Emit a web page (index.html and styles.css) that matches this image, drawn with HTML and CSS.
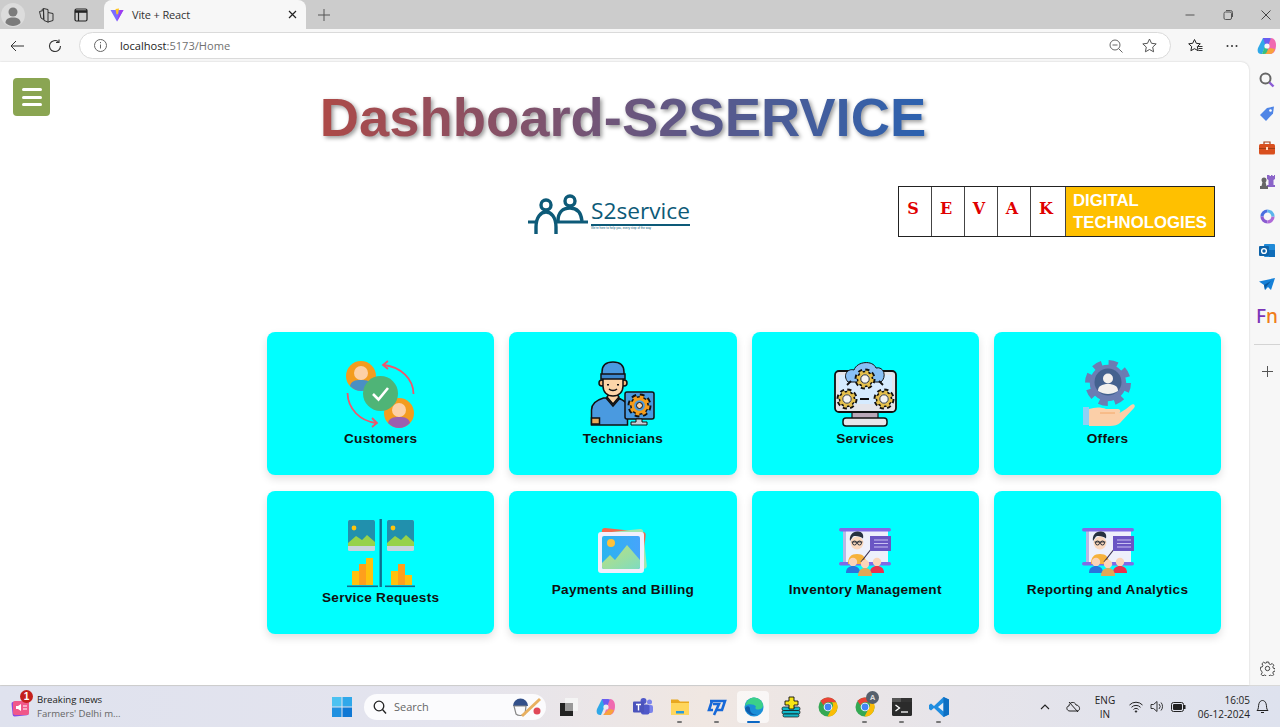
FILE: index.html
```html
<!DOCTYPE html>
<html lang="en">
<head>
<meta charset="UTF-8">
<meta name="viewport" content="width=device-width, initial-scale=1.0">
<title>Vite + React</title>
<link rel="stylesheet" href="styles.css">
</head>
<body>

<svg class="defs" width="0" height="0">
    <symbol id="gear" viewBox="-12 -12 24 24">
        <circle r="9.500" fill="none" stroke="currentColor" stroke-width="4" stroke-dasharray="4.200 3.260"/>
        <circle r="7.600" fill="none" stroke="currentColor" stroke-width="3"/>
    </symbol>
    <symbol id="presenter" viewBox="0 0 52 50">
        <rect x="4" y="2" width="45" height="34" fill="#eef0fb"/>
        <rect x="4" y="2" width="3" height="34" fill="#b6b8e6"/>
        <rect width="52" height="3.400" y="1" rx="1.700" fill="#7f6be6"/>
        <rect width="52" height="3.400" y="35" rx="1.700" fill="#7f6be6"/>
        <path d="M9 37c0-7 3-10 9-10s9 3 9 10z" fill="#f6b23c"/>
        <circle cx="18" cy="16" r="6.400" fill="#fbd9bd"/>
        <path d="M11 14c-1-6 3-10 8-9.500 4 0 6 3 5 7-2-2-7-3-10-2z" fill="#27313f"/>
        <path d="M12.500 15h11" stroke="#1d2530" stroke-width=".8"/>
        <circle cx="15.500" cy="16" r="2" fill="none" stroke="#1d2530" stroke-width=".9"/>
        <circle cx="20.500" cy="16" r="2" fill="none" stroke="#1d2530" stroke-width=".9"/>
        <path d="M22 35l11-14" stroke="#3a3050" stroke-width="1.200"/>
        <rect x="31" y="9" width="21" height="15" fill="#6a55c4"/>
        <path d="M35 13h14M35 16.500h14M35 20h14" stroke="#c8c0f2" stroke-width="1.100"/>
        <circle cx="14" cy="35" r="4.200" fill="#fbd4b8"/>
        <path d="M7 46c0-5 3-7 7-7s7 2 7 7z" fill="#2a74dc"/>
        <circle cx="38" cy="35" r="4.200" fill="#fbd4b8"/>
        <path d="M31 46c0-5 3-7 7-7s7 2 7 7z" fill="#e8324e"/>
        <circle cx="26" cy="37" r="4.200" fill="#fbd4b8"/>
        <path d="M19 49c0-5 3-8 7-8s7 3 7 8z" fill="#e0a856"/>
    </symbol>
</svg>

<div class="window">

    <!-- tab strip -->
    <div class="tabstrip">
        <span class="strip-btn profile">
            <svg width="24" height="24" viewBox="0 0 24 24"><circle cx="12" cy="12" r="12" fill="#dcdcdc"/><circle cx="12" cy="9" r="4.500" fill="#7b7b7b"/><path d="M4.500 20c0-4 3-5.500 7.500-5.500s7.500 1.500 7.500 5.500c-2 2-5 3-7.500 3s-5.500-1-7.500-3z" fill="#7b7b7b"/></svg>
        </span>
        <span class="strip-btn workspaces">
            <svg width="16" height="16" viewBox="0 0 16 16" fill="none" stroke="#333" stroke-width="1"><path d="M5.500 1.500l4.500 1v3l5 1v7l-5 1.500-4-1.500z"/><path d="M3.500 3l2-1.500M1.500 4.500l4-1v9l-2.500-1.500zM10 5.500v10"/></svg>
        </span>
        <span class="strip-btn tabs-btn">
            <svg width="14" height="14" viewBox="0 0 14 14" fill="none" stroke="#222" stroke-width="1.200"><rect x="1" y="1" width="12" height="12" rx="1.500"/><path d="M1 3.500h12" stroke-width="2.600"/><path d="M4.500 4v9"/></svg>
        </span>
        <div class="tab">
            <svg width="14" height="14" viewBox="0 0 14 14"><path d="M0.500 2l6.500 11.500L13.500 2z" fill="#7b6cff"/><path d="M7 13.500L10 2h3.500z" fill="#a03cf0"/><path d="M5.500 1L9 .5 8 6l-1.500.5z" fill="#ffc420"/></svg>
            <span class="tab-title">Vite + React</span>
            <svg class="tab-close" width="9" height="9" viewBox="0 0 9 9"><path d="M1 1l7 7M8 1L1 8" stroke="#222" stroke-width="1.200"/></svg>
        </div>
        <span class="strip-btn new-tab">
            <svg width="12" height="12" viewBox="0 0 12 12"><path d="M6 0v12M0 6h12" stroke="#555" stroke-width="1"/></svg>
        </span>
        <div class="window-controls">
            <svg width="12" height="12" viewBox="0 0 12 12"><path d="M1.500 6h9" stroke="#555"/></svg>
            <svg width="12" height="12" viewBox="0 0 12 12" fill="none" stroke="#555"><rect x="2" y="3" width="7.500" height="7.500" rx="1.500"/><path d="M4 1.500h4.500a2 2 0 0 1 2 2V8"/></svg>
            <svg width="12" height="12" viewBox="0 0 12 12"><path d="M1.500 1.500l9 9M10.500 1.500l-9 9" stroke="#444"/></svg>
        </div>
    </div>

    <!-- address bar -->
    <div class="toolbar">
        <span class="tool-btn">
            <svg width="14" height="12" viewBox="0 0 14 12" fill="none" stroke="#333" stroke-width="1"><path d="M14 6H1M6 1L1 6l5 5"/></svg>
        </span>
        <span class="tool-btn reload">
            <svg width="14" height="14" viewBox="0 0 14 14" fill="none" stroke="#333" stroke-width="1.100"><path d="M12.500 7A5.500 5.500 0 1 1 10.500 2.800"/><path d="M11 .5v3h-3"/></svg>
        </span>
        <div class="address">
            <svg width="13" height="13" viewBox="0 0 13 13" fill="none" stroke="#666"><circle cx="6.500" cy="6.500" r="6"/><path d="M6.500 5.500v4M6.500 3v1.200"/></svg>
            <span class="url"><b>localhost</b>:5173/Home</span>
            <svg class="addr-zoom" width="14" height="14" viewBox="0 0 14 14" fill="none" stroke="#666"><circle cx="6" cy="6" r="5"/><path d="M3.500 6h5M9.500 9.500l4 4"/></svg>
            <svg class="addr-star" width="15" height="15" viewBox="0 0 15 15" fill="none" stroke="#555"><path d="M7.500 1l2 4.300 4.700.6-3.500 3.200.9 4.700-4.100-2.300-4.100 2.300.9-4.700L.8 5.900l4.700-.6z"/></svg>
        </div>
        <span class="tool-btn favs">
            <svg width="15" height="15" viewBox="0 0 15 15" fill="none" stroke="#222"><path d="M6.500 1.500l1.800 3.800 4 .5-3 2.800.8 4.100-3.600-2-3.600 2 .8-4.100-3-2.800 4-.5z"/><path d="M10 8.500h4.500M10.500 10.500h4M10.500 12.500h4" stroke="#333"/></svg>
        </span>
        <span class="tool-btn dots">
            <svg width="12" height="4" viewBox="0 0 12 4" fill="#333"><circle cx="1.500" cy="2" r="1"/><circle cx="6" cy="2" r="1"/><circle cx="10.500" cy="2" r="1"/></svg>
        </span>
        <span class="copilot">
            <svg width="20" height="20" viewBox="0 0 20 20"><path d="M6 2h5l-3 9-3 7H4C1 18 0 15 1 12z" fill="#2fa8e8"/><path d="M6 2h6c2 0 3 1 4 3l-4 3H8z" fill="#6a5cf0"/><path d="M14 2c3 0 5 3 5 7 0 5-2 9-6 9H8l3-8z" fill="#f06ab0"/><path d="M7 18h6c2 0 4-2 5-5l-5-1z" fill="#f8a23c"/><path d="M8 10l-3 8h2c2 0 3-2 4-5z" fill="#35c07e"/><circle cx="10" cy="10" r="2.600" fill="#f7f7f7"/></svg>
        </span>
    </div>

    <div class="main">

        <div class="content">
            <button class="menu-toggle">
                <span></span><span></span><span></span>
            </button>

            <h1 class="page-title">Dashboard-S2SERVICE</h1>

            <div class="logos">
                <div class="logo-s2">
                    <svg width="60" height="42" viewBox="0 0 60 42" fill="none" stroke="#0d5a78" stroke-width="3.400">
                        <circle cx="18" cy="11" r="5"/>
                        <circle cx="42" cy="7" r="5"/>
                        <path d="M8 40V33c0-10 5-15 10-15s10 5 10 15v7"/>
                        <path d="M30 27c0-9 5-13 12-13s11 4 12 13"/>
                        <path d="M0 28h10M26 28h34" stroke-width="3"/>
                    </svg>
                    <div class="s2-text">
                        <span class="s2-name">S2service</span>
                        <span class="s2-tag">We're here to help you, every step of the way</span>
                    </div>
                </div>
                <div class="logo-sevak">
                    <span class="sevak-cell">S</span>
                    <span class="sevak-cell">E</span>
                    <span class="sevak-cell">V</span>
                    <span class="sevak-cell">A</span>
                    <span class="sevak-cell wide">K</span>
                    <span class="sevak-brand">DIGITAL<br>TECHNOLOGIES</span>
                </div>
            </div>

            <div class="card-grid">

                <div class="card">
                    <svg class="card-icon" viewBox="0 0 70 70">
                        <circle cx="15" cy="16" r="15" fill="#f39c1f"/>
                        <circle cx="15" cy="13" r="7" fill="#fdd0a5"/>
                        <path d="M4 26c1-5 5-6 11-6s10 1 11 6c-3 3-7 5-11 5s-8-2-11-5z" fill="#4a8fc4"/>
                        <circle cx="53" cy="53" r="15" fill="#f39c1f"/>
                        <circle cx="53" cy="50" r="7" fill="#fdd0a5"/>
                        <path d="M42 63c1-5 5-6 11-6s10 1 11 6c-3 3-7 5-11 5s-8-2-11-5z" fill="#9b5fae"/>
                        <circle cx="34.500" cy="33.500" r="17.500" fill="#4fb477"/>
                        <path d="M27 34l5.500 5.500L42 28" fill="none" stroke="#fff" stroke-width="2.600"/>
                        <g fill="none" stroke="#f0566c" stroke-width="1.800">
                            <path d="M67.500 34C67.500 19 55 7 38 5"/>
                            <path d="M42 1l-5 4 5 4"/>
                            <path d="M1.500 33C2 49 14 61 30 63"/>
                            <path d="M26 58l5 5-5 4"/>
                        </g>
                    </svg>
                    <span class="card-label">Customers</span>
                </div>

                <div class="card">
                    <svg class="card-icon" viewBox="0 0 70 70">
                        <g stroke="#111" stroke-width="1.500">
                            <path d="M3.500 65V50c0-7 5-10 12-12h14c7 2 10 5 10 12v15z" fill="#4a9ae0"/>
                            <path d="M19 37l6 7 6-7-3-4h-6z" fill="#fbd2a2"/>
                            <path d="M18 38l7 8 7-8" fill="none"/>
                            <rect x="3.500" y="58" width="8" height="6" fill="#e8a95a"/>
                            <rect x="37" y="32" width="29" height="27" rx="2" fill="#4a9ae0"/>
                            <circle cx="14" cy="23" r="3" fill="#f5b87a"/>
                            <circle cx="36" cy="23" r="3" fill="#f5b87a"/>
                            <path d="M15 18h20v8c0 6-4 10-10 10s-10-4-10-10z" fill="#fcd5a8"/>
                            <path d="M14 12c0-8 5-10 11-10s11 2 11 10v5H14z" fill="#4a9ae0"/>
                            <path d="M13 19h24v-5H13z" fill="#3c86cc"/>
                        </g>
                        <path d="M20 24v1.500M30 24v1.500" stroke="#111" stroke-width="2"/>
                        <path d="M21 29c2 2 6 2 8 0" stroke="#111" fill="none" stroke-width="1.300"/>
                        <path d="M48 59h6v3h5v3H43v-3h5z" fill="#c6cdd8" stroke="#111"/>
                        <use href="#gear" x="39" y="33" width="25" height="25" class="gear-dark"/>
                        <use href="#gear" x="41" y="35" width="21" height="21" class="gear-orange"/>
                        <circle cx="51.500" cy="45.500" r="3" fill="#fcd5a8" stroke="#111"/>
                    </svg>
                    <span class="card-label">Technicians</span>
                </div>

                <div class="card">
                    <svg class="card-icon" viewBox="0 0 70 70">
                        <rect x="22" y="52" width="26" height="9" fill="#b9a8b8" stroke="#111" stroke-width="1.200"/>
                        <rect x="13" y="58" width="44" height="8" rx="3" fill="#e6e6ea" stroke="#111" stroke-width="1.500"/>
                        <rect x="5" y="11" width="61" height="41" rx="4" fill="#e4e4ea" stroke="#111" stroke-width="1.800"/>
                        <rect x="9" y="15" width="53" height="29" fill="#d6ebff"/>
                        <path d="M18 22C12 15 18 8 24 10 27 1 43 0 46 8c8-2 11 9 5 14z" fill="#88bff5" stroke="#111" stroke-width="1"/>
                        <path d="M17 25l4-4M49 21l4 4M30 39h9" stroke="#111" stroke-width="1.800"/>
                        <use href="#gear" x="24" y="8" width="22" height="22" class="gear-dark"/>
                        <use href="#gear" x="26" y="10" width="18" height="18" class="gear-gold"/>
                        <circle cx="35" cy="19" r="4.200" fill="#f4f4f4" stroke="#111" stroke-width=".8"/>
                        <use href="#gear" x="6" y="28" width="22" height="22" class="gear-dark"/>
                        <use href="#gear" x="8" y="30" width="18" height="18" class="gear-gold"/>
                        <circle cx="17" cy="39" r="4.200" fill="#f4f4f4" stroke="#111" stroke-width=".8"/>
                        <use href="#gear" x="43" y="28" width="22" height="22" class="gear-dark"/>
                        <use href="#gear" x="45" y="30" width="18" height="18" class="gear-gold"/>
                        <circle cx="54" cy="39" r="4.200" fill="#f4f4f4" stroke="#111" stroke-width=".8"/>
                    </svg>
                    <span class="card-label">Services</span>
                </div>

                <div class="card">
                    <svg class="card-icon" viewBox="0 0 70 70">
                        <use href="#gear" x="11" y="-1" width="48" height="48" class="gear-slate"/>
                        <circle cx="35" cy="23" r="15" fill="#6b7db3"/>
                        <circle cx="35" cy="22" r="13.500" fill="#43618f"/>
                        <circle cx="35" cy="18.500" r="5" fill="#f2f0ee"/>
                        <path d="M25 31c0-5 4-7 10-7s10 2 10 7c-3 2-7 3-10 3s-7-1-10-3z" fill="#f2f0ee"/>
                        <rect x="10" y="47" width="6" height="18" fill="#8fd0f5"/>
                        <path d="M16 49c6-2 12-2 17 0h12c3 0 3 4 0 5l8-5 5-4c3-2 5 1 3 3L47 63c-2 2-6 3-10 3H16z" fill="#fbcfa8"/>
                        <path d="M27 53h15" stroke="#f4a869" stroke-width="1"/>
                    </svg>
                    <span class="card-label">Offers</span>
                </div>

                <div class="card">
                    <svg class="card-icon" viewBox="0 0 70 70">
                        <rect x="33.500" y="0" width="2.400" height="68" fill="#0d6f90"/>
                        <rect x="2" y="1" width="27" height="31" rx="1.500" fill="#c9d4dc"/>
                        <path d="M2 2.500a1.500 1.500 0 0 1 1.500-1.500h24A1.500 1.500 0 0 1 29 2.500V27H2z" fill="#2190ad"/>
                        <path d="M2 24l8-7 6 4 5-5 8 7v4H2z" fill="#96d24a"/>
                        <circle cx="8" cy="9" r="2.400" fill="#ffc40c"/>
                        <rect x="41" y="1" width="27" height="31" rx="1.500" fill="#c9d4dc"/>
                        <path d="M41 2.500a1.500 1.500 0 0 1 1.500-1.500h24A1.500 1.500 0 0 1 68 2.500V27H41z" fill="#2190ad"/>
                        <path d="M41 24l8-7 6 4 5-5 8 7v4H41z" fill="#96d24a"/>
                        <circle cx="47" cy="9" r="2.400" fill="#ffc40c"/>
                        <rect x="6" y="52" width="7" height="14" fill="#ffc10e"/>
                        <rect x="13" y="45" width="7" height="21" fill="#ff9f1c"/>
                        <rect x="20" y="39" width="7" height="27" fill="#ffc10e"/>
                        <rect x="45" y="52" width="7" height="14" fill="#ffc10e"/>
                        <rect x="52" y="45" width="7" height="21" fill="#ff9f1c"/>
                        <rect x="59" y="56" width="7" height="10" fill="#ffc10e"/>
                        <rect x="1" y="66.500" width="31" height="1.600" fill="#0d6f90"/>
                        <rect x="39" y="66.500" width="30" height="1.600" fill="#0d6f90"/>
                    </svg>
                    <span class="card-label">Service Requests</span>
                </div>

                <div class="card">
                    <svg class="card-icon small" viewBox="0 0 52 50">
                        <defs>
                            <linearGradient id="sky" x1="0" y1="0" x2="1" y2="0"><stop offset="0" stop-color="#2ab4f0"/><stop offset="1" stop-color="#46a4fb"/></linearGradient>
                            <linearGradient id="hill" x1="0" y1="0" x2="1" y2="1"><stop offset="0" stop-color="#bfe07a"/><stop offset="1" stop-color="#7fdcc0"/></linearGradient>
                        </defs>
                        <rect x="3" y="3" width="44" height="40" rx="3" fill="#f2694f" transform="rotate(6 25 23)"/>
                        <rect x="4" y="4" width="44" height="40" rx="3" fill="#a4e6b0" transform="rotate(-6 25 23)"/>
                        <rect x="1" y="5" width="46" height="41" rx="3" fill="#f1effc"/>
                        <rect x="5" y="9" width="38" height="33" rx="2" fill="url(#sky)"/>
                        <path d="M5 36l8-8 5 5 12-15 13 15v7a2 2 0 0 1-2 2H7a2 2 0 0 1-2-2z" fill="url(#hill)"/>
                        <circle cx="14" cy="16" r="4" fill="#ffc13a"/>
                    </svg>
                    <span class="card-label">Payments and Billing</span>
                </div>

                <div class="card">
                    <svg class="card-icon small"><use href="#presenter"/></svg>
                    <span class="card-label">Inventory Management</span>
                </div>

                <div class="card">
                    <svg class="card-icon small"><use href="#presenter"/></svg>
                    <span class="card-label">Reporting and Analytics</span>
                </div>

            </div>
        </div>

        <!-- edge sidebar -->
        <div class="sidebar">
            <span class="side-item">
                <svg width="16" height="16" viewBox="0 0 16 16" fill="none"><circle cx="6.500" cy="6.500" r="5" stroke="#666" stroke-width="2"/><path d="M10.500 10.500l4 4" stroke="#8b5cd6" stroke-width="2.400"/></svg>
            </span>
            <span class="side-item">
                <svg width="16" height="16" viewBox="0 0 16 16"><path d="M1 9l7-7 7-1.500-1 7-7 7.500z" fill="#4f85e6"/><circle cx="11.500" cy="4.500" r="1.300" fill="#fff"/></svg>
            </span>
            <span class="side-item">
                <svg width="16" height="14" viewBox="0 0 16 14"><path d="M5 3V1h6v2" fill="none" stroke="#a33d14" stroke-width="1.200"/><rect y="3" width="16" height="10.500" rx="1.500" fill="#d94f1e"/><rect y="7" width="16" height="1" fill="#a33d14"/><rect x="7" y="6" width="2" height="3" fill="#ffd9c0"/></svg>
            </span>
            <span class="side-item">
                <svg width="16" height="16" viewBox="0 0 16 16"><path d="M9 1h1.500v1H12V1h1.500v1H15V1h1v4l-1.500 1v5H16v2H8v-2h1.500V6L8 5V1z" fill="#8a64c8"/><circle cx="5" cy="6" r="2.500" fill="#666"/><path d="M3.500 8h3l1 4H9v3H1v-3h1.500z" fill="#666"/></svg>
            </span>
            <span class="side-item">
                <svg width="15" height="15" viewBox="0 0 15 15" fill="none" stroke-width="3.200"><path d="M7.500 2A5.500 5.500 0 0 0 2 7.500" stroke="#4a6fe0"/><path d="M2 7.500A5.500 5.500 0 0 0 7.500 13" stroke="#8a5cd0"/><path d="M7.500 13A5.500 5.500 0 0 0 13 7.500" stroke="#b06ad8"/><path d="M13 7.500A5.500 5.500 0 0 0 7.500 2" stroke="#5cb6ec"/></svg>
            </span>
            <span class="side-item">
                <svg width="16" height="15" viewBox="0 0 16 15"><rect x="5" y="1" width="11" height="13" rx="1" fill="#1f8ad8"/><rect x="10" y="7" width="6" height="7" fill="#0f6cb8"/><rect y="3" width="10" height="10" rx="1" fill="#0d62a8"/><circle cx="5" cy="8" r="2.400" fill="none" stroke="#fff" stroke-width="1.400"/></svg>
            </span>
            <span class="side-item">
                <svg width="16" height="13" viewBox="0 0 16 13"><path d="M0 3.500L16 0l-4 12-3-3-3 3-1-5z" fill="#1681d8"/><path d="M5 7l7-4-5 6-1 3z" fill="#0b5aa0"/></svg>
            </span>
            <span class="side-item side-fn"><span class="fn-f">F</span><span class="fn-n">n</span></span>
            <hr class="side-rule">
            <span class="side-item">
                <svg width="11" height="11" viewBox="0 0 11 11"><path d="M5.500 0v11M0 5.500h11" stroke="#555"/></svg>
            </span>
            <span class="side-item side-gear">
                <svg width="15" height="15" viewBox="0 0 15 15" fill="none" stroke="#444"><circle cx="7.500" cy="7.500" r="2.200"/><path d="M6.300 1h2.400l.4 1.900 1.500.6 1.600-1 1.600 1.700-1 1.600.6 1.500 1.900.4v2.400l-1.900.4-.6 1.500 1 1.600-1.700 1.600-1.600-1-1.500.6-.4 1.400H6.300l-.4-1.600-1.500-.6-1.600 1-1.600-1.700 1-1.600-.6-1.500L.4 8.700V6.300l1.900-.4.6-1.500-1-1.600 1.700-1.600 1.600 1 1.500-.6z"/></svg>
            </span>
        </div>
    </div>

    <!-- windows taskbar -->
    <div class="taskbar">
        <div class="news">
            <span class="news-icon">
                <svg width="22" height="24" viewBox="0 0 22 24"><rect x="2" y="6" width="16" height="15" rx="2" transform="rotate(-6 10 13)" fill="#8a4ae0"/><rect x="3" y="6" width="16" height="14" rx="2" fill="#f0588a"/><path d="M6 11h2l3-2v7l-3-2H6z" fill="#fff"/><path d="M13 11h4M13 14h4" stroke="#fff" stroke-width="1.200"/></svg>
                <span class="news-badge">1</span>
            </span>
            <div class="news-text">
                <span class="news-title">Breaking news</span>
                <span class="news-sub">Farmers' Delhi m...</span>
            </div>
        </div>

        <svg class="start" width="20" height="20" viewBox="0 0 20 20"><rect width="9.500" height="9.500" fill="#4cc2f1"/><rect x="10.500" width="9.500" height="9.500" fill="#30a8ea"/><rect y="10.500" width="9.500" height="9.500" fill="#1f90e0"/><rect x="10.500" y="10.500" width="9.500" height="9.500" fill="#0f78d4"/></svg>

        <div class="task-search">
            <svg width="14" height="14" viewBox="0 0 14 14" fill="none" stroke="#222" stroke-width="1.300"><circle cx="6" cy="6" r="4.800"/><path d="M9.500 9.500l3.500 4"/></svg>
            <span class="search-word">Search</span>
            <svg class="search-art" width="34" height="22" viewBox="0 0 34 22"><path d="M3 10a7.500 7.500 0 0 1 15 0z" fill="#33508a"/><path d="M4 10h12l-1 8c-3 2-7 2-9 0z" fill="none" stroke="#888" stroke-width="1.200"/><path d="M12 20L30 3" stroke="#e8b060" stroke-width="3"/><circle cx="27" cy="15" r="3.500" fill="#e04858"/></svg>
        </div>

        <div class="task-icons">
            <span class="task-icon">
                <svg width="20" height="20" viewBox="0 0 20 20"><rect x="6" y="1" width="13" height="13" fill="#f4f4f4"/><rect x="1" y="6" width="13" height="13" fill="#222"/><rect x="6" y="6" width="8" height="8" fill="#999"/></svg>
            </span>
            <span class="task-icon">
                <svg width="20" height="20" viewBox="0 0 20 20"><path d="M6 2h5l-3 9-3 7H4C1 18 0 15 1 12z" fill="#2fa8e8"/><path d="M6 2h6c2 0 3 1 4 3l-4 3H8z" fill="#6a5cf0"/><path d="M14 2c3 0 5 3 5 7 0 5-2 9-6 9H8l3-8z" fill="#f06ab0"/><path d="M7 18h6c2 0 4-2 5-5l-5-1z" fill="#f8a23c"/><circle cx="10" cy="10" r="2.600" fill="#ecebf0"/></svg>
            </span>
            <span class="task-icon">
                <svg width="20" height="18" viewBox="0 0 20 18"><circle cx="16.500" cy="4" r="2.500" fill="#7b83eb"/><rect x="13" y="7" width="7" height="8" rx="2" fill="#7b83eb"/><circle cx="10.500" cy="3" r="3" fill="#5059c9"/><rect x="8" y="6.500" width="8.500" height="10" rx="2" fill="#5059c9"/><rect y="3.500" width="11" height="11" rx="1" fill="#4b53bc"/><path d="M3 6.500h5M5.500 6.500v6" stroke="#fff" stroke-width="1.400"/></svg>
            </span>
            <span class="task-icon dot">
                <svg width="20" height="18" viewBox="0 0 20 18"><path d="M1 1.500h7l2 2h9V6H1z" fill="#e8a820"/><rect x="1" y="5" width="18" height="12" fill="#ffd65c"/><rect x="6" y="13" width="8" height="2.500" fill="#2a9adc"/></svg>
            </span>
            <span class="task-icon dot">
                <svg width="20" height="18" viewBox="0 0 20 18" fill="none" stroke="#1668d8" stroke-width="2.600"><path d="M3 3h15l-3 9h-5"/><path d="M6 6h6l-5 11M5 3L2 12h4"/></svg>
            </span>
            <span class="task-icon active">
                <svg width="20" height="20" viewBox="0 0 20 20"><circle cx="10" cy="10" r="9.500" fill="#1b8fd8"/><path d="M1 9C2 3 7 .5 10 .5c5 0 9 4 9 8 0 3-3 4-5 4-3 0-3-2-2-3-2-3-9-3-11-.5z" fill="#3bd08a"/><path d="M6 12c0 4 4 6 7 5.500-4 1.500-10 0-12-6C3 8 6 9 6 12z" fill="#0f5cab"/></svg>
            </span>
            <span class="task-icon">
                <svg width="20" height="22" viewBox="0 0 20 22"><rect x="1" y="11" width="18" height="3.500" rx="1.500" fill="#12b6c8" stroke="#111" stroke-width=".7"/><rect x="1" y="14.500" width="18" height="3.500" rx="1.500" fill="#12b6c8" stroke="#111" stroke-width=".7"/><rect x="2" y="18" width="16" height="3" rx="1.500" fill="#12b6c8" stroke="#111" stroke-width=".7"/><path d="M8 1h5v4h4v4h-4v4H8V9H4V5h4z" fill="#f6e614" stroke="#111" stroke-width=".9"/></svg>
            </span>
            <span class="task-icon">
                <svg width="20" height="20" viewBox="0 0 20 20"><circle cx="10" cy="10" r="9.500" fill="#34a853"/><path d="M10 .5a9.500 9.500 0 0 1 8.300 4.800H10a4.800 4.800 0 0 0-4.500 3L2.500 4A9.500 9.500 0 0 1 10 .5z" fill="#ea4335"/><path d="M18.300 5.300A9.500 9.500 0 0 1 9.500 19.500L14 11a4.800 4.800 0 0 0 0-5.700z" fill="#fbbc05"/><circle cx="10" cy="10" r="4.300" fill="#fff"/><circle cx="10" cy="10" r="3.400" fill="#4285f4"/></svg>
            </span>
            <span class="task-icon dot">
                <svg width="20" height="20" viewBox="0 0 20 20"><circle cx="10" cy="10" r="9.500" fill="#34a853"/><path d="M10 .5a9.500 9.500 0 0 1 8.300 4.800H10a4.800 4.800 0 0 0-4.500 3L2.500 4A9.500 9.500 0 0 1 10 .5z" fill="#ea4335"/><path d="M18.300 5.300A9.500 9.500 0 0 1 9.500 19.500L14 11a4.800 4.800 0 0 0 0-5.700z" fill="#fbbc05"/><circle cx="10" cy="10" r="4.300" fill="#fff"/><circle cx="10" cy="10" r="3.400" fill="#4285f4"/></svg>
                <span class="chrome-badge">A</span>
            </span>
            <span class="task-icon dot">
                <svg width="20" height="18" viewBox="0 0 20 18"><rect width="20" height="18" rx="1.500" fill="#2b2b2b"/><rect width="20" height="4" fill="#555"/><rect x="9" width="11" height="4" fill="#333"/><path d="M3.500 7l4 3-4 3" fill="none" stroke="#fff" stroke-width="1.300"/><path d="M9 14h7" stroke="#fff" stroke-width="1.300"/></svg>
            </span>
            <span class="task-icon dot">
                <svg width="20" height="20" viewBox="0 0 20 20"><path d="M14.500 0L20 2.500v15L14.500 20 5 11l-3 2.500L0 12V8l2-1.500L5 9z" fill="#1f8de0"/><path d="M14.500 5.500L9 10l5.500 4.500z" fill="#eaeef6"/><path d="M14.500 0L20 2.500v15L14.500 20z" fill="#0e6fc2"/></svg>
            </span>
        </div>

        <div class="tray">
            <svg class="tray-chevron" width="10" height="6" viewBox="0 0 10 6" fill="none" stroke="#222" stroke-width="1.100"><path d="M1 5l4-4 4 4"/></svg>
            <svg class="tray-cloud" width="15" height="14" viewBox="0 0 15 14" fill="none" stroke="#222" stroke-width="1"><path d="M4 11c-4 0-4-5-1-5 0-4 6-5 7-1 4 0 5 6 1 6z"/><path d="M3 2l9 10"/></svg>
            <span class="lang">ENG<br>IN</span>
            <svg class="tray-wifi" width="14" height="12" viewBox="0 0 14 12" fill="none" stroke="#222"><path d="M.5 4a9 9 0 0 1 13 0M2.500 6.300a6.200 6.200 0 0 1 9 0M4.500 8.500a3.300 3.300 0 0 1 5 0"/><circle cx="7" cy="10.500" r=".7" fill="#222"/></svg>
            <svg class="tray-sound" width="14" height="13" viewBox="0 0 14 13" fill="none" stroke="#222" stroke-width=".9"><path d="M1 4.500h2.500L7 1.500v10l-3.500-3H1z"/><path d="M9 4a3.500 3.500 0 0 1 0 5M11 2.500a6 6 0 0 1 0 8"/></svg>
            <svg class="tray-battery" width="15" height="10" viewBox="0 0 15 10"><rect x=".5" y=".5" width="12" height="9" rx="2" fill="none" stroke="#222"/><rect x="2" y="2" width="9" height="6" rx="1" fill="#222"/><rect x="13" y="3" width="1.500" height="4" fill="#222"/></svg>
            <span class="clock">16:05<br>06-12-2024</span>
            <svg class="tray-bell" width="13" height="15" viewBox="0 0 13 15" fill="none" stroke="#222"><path d="M1 11.500c2-1.500 1-4 2-7 .7-2 2-3 3.500-3s2.800 1 3.500 3c1 3 0 5.500 2 7z"/><path d="M5 13.500h3"/></svg>
        </div>
    </div>
</div>

</body>
</html>
```

FILE: styles.css
```css
* {
    box-sizing: border-box;
}

html, body {
    margin: 0;
    padding: 0;
    height: 100%;
    overflow: hidden;
}

body {
    font-family: "Liberation Sans", Arial, sans-serif;
}

.defs {
    position: absolute;
}

.window {
    display: flex;
    flex-direction: column;
    height: 727px;
    background-color: #f7f7f7;
}

/* tab strip */
.tabstrip {
    display: flex;
    align-items: stretch;
    height: 29px;
    background-color: #cccccc;
}

.strip-btn {
    display: flex;
    align-items: center;
    justify-content: center;
}

.profile {
    width: 26px;
}

.workspaces {
    width: 40px;
}

.tabs-btn {
    width: 30px;
    margin-right: 8px;
}

.tab {
    display: flex;
    align-items: center;
    width: 202px;
    padding: 0 9px 0 6px;
    background-color: #f7f7f7;
    border-radius: 8px 8px 0 0;
}

.tab-title {
    flex: 1;
    margin-left: 8px;
    font-family: "Open Sans", sans-serif;
    font-size: 11px;
    letter-spacing: -0.15px;
    color: #333;
}

.new-tab {
    width: 36px;
}

.window-controls {
    display: flex;
    align-items: center;
    gap: 26px;
    margin-left: auto;
    padding-right: 8px;
}

/* address bar */
.toolbar {
    display: flex;
    align-items: center;
    height: 33px;
}

.tool-btn {
    display: flex;
    align-items: center;
    justify-content: center;
    width: 34px;
}

.reload {
    margin-left: 4px;
}

.address {
    flex: 1;
    display: flex;
    align-items: center;
    height: 27px;
    margin-left: 7px;
    padding: 0 13px 0 14px;
    background-color: #fff;
    border: 1px solid #dadada;
    border-radius: 14px;
}

.url {
    margin-left: 13px;
    font-family: "Open Sans", sans-serif;
    font-size: 11.100px;
    color: #707070;
}

.url b {
    font-weight: 400;
    color: #222;
}

.addr-zoom {
    margin-left: auto;
}

.addr-star {
    margin-left: 19px;
}

.favs {
    margin-left: 7px;
}

.dots {
    margin-left: 3px;
}

.copilot {
    display: flex;
    justify-content: center;
    width: 26px;
    margin-left: 5px;
}

/* page area */
.main {
    flex: 1;
    display: flex;
    min-height: 0;
}

.content {
    position: relative;
    flex: 1;
    padding-top: 24px;
    background-color: #fff;
    border-radius: 0 8px 0 0;
    box-shadow: 0 0 2px rgba(0, 0, 0, 0.2);
}

.menu-toggle {
    position: absolute;
    top: 16px;
    left: 13px;
    display: flex;
    flex-direction: column;
    align-items: center;
    justify-content: center;
    gap: 4.500px;
    width: 37px;
    height: 38px;
    padding: 0;
    background-color: #8aa552;
    border: none;
    border-radius: 4px;
}

.menu-toggle span {
    width: 20px;
    height: 3px;
    background-color: #fff;
    border-radius: 2px;
}

.page-title {
    margin: 0;
    padding-right: 3px;
    font-size: 54.400px;
    line-height: 64px;
    font-weight: 700;
    text-align: center;
    color: transparent;
    background: linear-gradient(90deg, #ac4a48 26%, #2c62b0 74%);
    -webkit-background-clip: text;
    background-clip: text;
    filter: drop-shadow(2px 2px 2px rgba(0, 0, 0, 0.4));
}

.logos {
    display: flex;
    align-items: flex-start;
    height: 51px;
    margin-top: 36px;
    padding-left: 528px;
}

.logo-s2 {
    display: flex;
    width: 162px;
    margin-top: 8px;
}

.logo-s2 svg {
    flex-shrink: 0;
}

.s2-text {
    display: flex;
    flex-direction: column;
    margin: 5px 0 0 3px;
    color: #0d5a78;
}

.s2-name {
    padding-bottom: 1px;
    font-family: "Open Sans", sans-serif;
    font-size: 22.700px;
    line-height: 24px;
    white-space: nowrap;
    border-bottom: 2px solid #0d5a78;
}

.s2-tag {
    font-size: 3px;
    line-height: 5px;
    white-space: nowrap;
}

.logo-sevak {
    display: flex;
    width: 317px;
    height: 51px;
    margin-left: 208px;
    border: 1px solid #222;
}

.sevak-cell {
    display: flex;
    align-items: center;
    justify-content: center;
    width: 33px;
    padding: 0 4px 6px 0;
    font-family: "DejaVu Serif", serif;
    font-size: 16px;
    font-weight: 700;
    color: #e00000;
    border-right: 1px solid #444;
}

.sevak-cell.wide {
    width: 35px;
}

.sevak-brand {
    flex: 1;
    padding: 3px 0 0 7px;
    font-size: 16.750px;
    line-height: 22px;
    font-weight: 700;
    color: #fff;
    background-color: #ffc000;
}

.card-grid {
    display: grid;
    grid-template-columns: repeat(4, 227.300px);
    grid-auto-rows: 143px;
    column-gap: 15px;
    row-gap: 16px;
    margin: 95px 0 0 267px;
}

.card {
    display: flex;
    flex-direction: column;
    align-items: center;
    justify-content: center;
    padding-bottom: 1px;
    background-color: #00ffff;
    border-radius: 8px;
    box-shadow: 0 4px 8px rgba(0, 0, 0, 0.12);
}

.card-icon {
    display: block;
    width: 70px;
    height: 70px;
}

.card-icon.small {
    width: 52px;
    height: 50px;
    margin-bottom: 4px;
}

.card-label {
    font-size: 13.600px;
    line-height: 17px;
    font-weight: 700;
    letter-spacing: 0.24px;
    color: #111;
}

.gear-dark {
    color: #111;
}

.gear-gold {
    color: #e6c04c;
}

.gear-orange {
    color: #f59c1c;
}

.gear-slate {
    color: #6b7db3;
}

/* edge sidebar */
.sidebar {
    display: flex;
    flex-direction: column;
    width: 31px;
    padding: 1px 0 0 5px;
}

.side-item {
    display: flex;
    align-items: center;
    justify-content: center;
    flex-shrink: 0;
    height: 34px;
}

.side-fn {
    margin-top: -2px;
    font-family: "Noto Sans", sans-serif;
    font-size: 19px;
    font-weight: 500;
}

.fn-f {
    color: #7b35b8;
}

.fn-n {
    color: #ef7d1a;
}

.side-rule {
    width: 100%;
    margin: 11px 0 9px 0;
    border: none;
    border-top: 1px solid #d4d4d4;
}

.side-gear {
    margin-top: auto;
}

/* taskbar */
.taskbar {
    display: flex;
    align-items: center;
    height: 42px;
    background: linear-gradient(90deg, #dfe2ee 0%, #e4e4ee 35%, #f0e7e2 55%, #e6e4ea 75%, #dee2ee 100%);
    border-top: 1px solid #d9d9d9;
    font-family: "Open Sans", sans-serif;
    color: #222;
}

.news {
    display: flex;
    align-items: center;
    width: 332px;
    padding-left: 10px;
}

.news-icon {
    position: relative;
    display: flex;
    width: 27px;
}

.news-badge {
    position: absolute;
    top: -5px;
    left: 10px;
    width: 13px;
    height: 13px;
    font-family: "Liberation Sans", sans-serif;
    font-size: 10px;
    line-height: 13px;
    font-weight: 700;
    text-align: center;
    color: #fff;
    background-color: #c4201c;
    border-radius: 50%;
}

.news-text {
    display: flex;
    flex-direction: column;
    font-size: 9.600px;
    line-height: 14px;
}

.news-sub {
    color: #666;
}

.task-search {
    display: flex;
    align-items: center;
    width: 182px;
    height: 26px;
    margin-left: 12px;
    padding: 0 2px 0 9px;
    background-color: #fbfbfd;
    border-radius: 13px;
}

.search-word {
    margin-left: 7px;
    font-size: 11px;
    color: #666;
}

.search-art {
    margin-left: auto;
}

.task-icons {
    display: flex;
    margin-left: 4px;
}

.task-icon {
    position: relative;
    display: flex;
    align-items: center;
    justify-content: center;
    width: 37px;
    height: 32px;
}

.task-icon svg {
    position: relative;
}

.task-icon.active::before {
    content: "";
    position: absolute;
    top: 0;
    bottom: 0;
    left: 2px;
    right: 3px;
    background-color: rgba(255, 255, 255, 0.65);
    border-radius: 4px;
}

.task-icon.active::after,
.task-icon.dot::after {
    content: "";
    position: absolute;
    bottom: 0;
    left: 50%;
    width: 5px;
    height: 2px;
    margin-left: -2.500px;
    background-color: #777;
    border-radius: 1px;
}

.task-icon.active::after {
    width: 13px;
    margin-left: -6.500px;
    background-color: #0a67c4;
}

.chrome-badge {
    position: absolute;
    top: 0;
    left: 20px;
    width: 13px;
    height: 13px;
    font-size: 7.500px;
    line-height: 13px;
    font-weight: 700;
    text-align: center;
    color: #ddd;
    background-color: #56606c;
    border-radius: 50%;
}

.tray {
    flex: 1;
    display: flex;
    align-items: center;
    padding-left: 83px;
}

.tray-cloud {
    margin-left: 16px;
}

.lang {
    width: 40px;
    margin-left: 4px;
    font-size: 10px;
    line-height: 14px;
    text-align: center;
}

.tray-wifi {
    margin-left: 4px;
}

.tray-sound {
    margin-left: 7px;
}

.tray-battery {
    margin-left: 7px;
}

.clock {
    margin-left: auto;
    font-size: 10px;
    line-height: 14px;
    text-align: right;
}

.tray-bell {
    margin: 0 11px 0 6px;
}
```
